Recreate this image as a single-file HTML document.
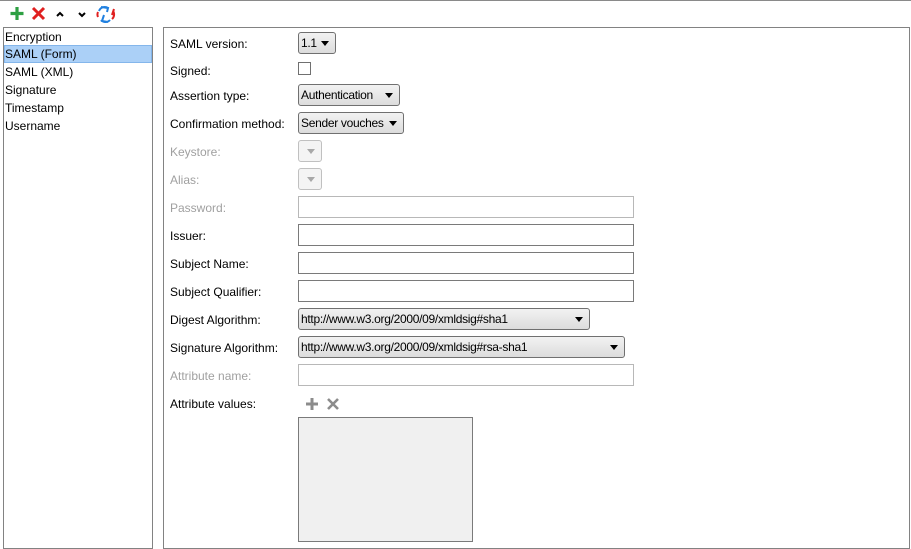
<!DOCTYPE html>
<html><head><style>
body{margin:0;width:911px;height:549px;background:#fff;position:relative;overflow:hidden;font-family:"Liberation Sans",sans-serif;font-size:12px;color:#000}
.a{position:absolute}
.lbl{position:absolute;left:170px;line-height:14px}
.dis{color:#a0a0a0}
.cb{position:absolute;left:298px;height:20px;border:1px solid #707070;border-radius:3px;background:linear-gradient(#f2f2f2,#dcdcdc);box-sizing:content-box;line-height:20px;padding-left:2px;letter-spacing:-0.3px;white-space:nowrap}
.cb:after{content:"";position:absolute;right:6px;top:8px;border-left:4px solid transparent;border-right:4px solid transparent;border-top:5px solid #000}
.cb.d{border-color:#c0c0c0;background:#f4f4f4}
.cb.d:after{border-top-color:#a8a8a8}
.tf{position:absolute;left:298px;width:334px;height:20px;border:1px solid #7a7a7a;background:#fff}
.tf.d{border-color:#b8b8b8}
.li{position:absolute;left:5px;line-height:14px}
</style></head><body>
<div class="a" style="left:0;top:0;width:911px;height:1px;background:#8a8a8a"></div>
<svg class="a" style="left:9px;top:5px" width="110" height="18">
<path d="M8 2v13M1.5 8.5h13" stroke="#2ea043" stroke-width="3.2"/>
<path d="M24 3l11 11M35 3L24 14" stroke="#e02020" stroke-width="3"/>
<path d="M48 11l3-3 3 3" stroke="#000" stroke-width="2" fill="none"/>
<path d="M70 8l3 3 3-3" stroke="#000" stroke-width="2" fill="none"/>
<path d="M90 6a6 6 0 0 1 9-3M92 2l7 1-1 4" stroke="#2080e0" stroke-width="2" fill="none"/>
<path d="M104 6a6 6 0 0 1-1 8M105 4l-2 6" stroke="#e02020" stroke-width="2" fill="none"/>
<path d="M101 15a6 6 0 0 1-9 0M95 10l-2 6 6 1" stroke="#2080e0" stroke-width="2" fill="none"/>
<path d="M89 12a6 6 0 0 1 0-5" stroke="#e02020" stroke-width="2" fill="none"/>
</svg>
<div class="a" style="left:3px;top:27px;width:148px;height:520px;border:1px solid #828282"></div>
<div class="a" style="left:4px;top:45px;width:146px;height:16px;background:#abd0f7;border:1px solid #84b6eb"></div>
<div class="li" style="top:30px">Encryption</div>
<div class="li" style="top:47px">SAML (Form)</div>
<div class="li" style="top:65px">SAML (XML)</div>
<div class="li" style="top:83px">Signature</div>
<div class="li" style="top:101px">Timestamp</div>
<div class="li" style="top:119px">Username</div>
<div class="a" style="left:163px;top:27px;width:745px;height:520px;border:1px solid #828282"></div>
<div class="lbl" style="top:37px">SAML version:</div>
<div class="lbl" style="top:64px">Signed:</div>
<div class="lbl" style="top:89px">Assertion type:</div>
<div class="lbl" style="top:117px">Confirmation method:</div>
<div class="lbl dis" style="top:145px">Keystore:</div>
<div class="lbl dis" style="top:173px">Alias:</div>
<div class="lbl dis" style="top:201px">Password:</div>
<div class="lbl" style="top:229px">Issuer:</div>
<div class="lbl" style="top:257px">Subject Name:</div>
<div class="lbl" style="top:285px">Subject Qualifier:</div>
<div class="lbl" style="top:313px">Digest Algorithm:</div>
<div class="lbl" style="top:341px">Signature Algorithm:</div>
<div class="lbl dis" style="top:369px">Attribute name:</div>
<div class="lbl" style="top:397px">Attribute values:</div>
<div class="cb" style="top:32px;width:34px">1.1</div>
<div class="a" style="left:298px;top:62px;width:11px;height:11px;border:1px solid #707070;background:#fff"></div>
<div class="cb" style="top:84px;width:98px">Authentication</div>
<div class="cb" style="top:112px;width:102px">Sender vouches</div>
<div class="cb d" style="top:140px;width:20px"></div>
<div class="cb d" style="top:168px;width:20px"></div>
<div class="tf d" style="top:196px"></div>
<div class="tf" style="top:224px"></div>
<div class="tf" style="top:252px"></div>
<div class="tf" style="top:280px"></div>
<div class="cb" style="top:308px;width:288px">http://www.w3.org/2000/09/xmldsig#sha1</div>
<div class="cb" style="top:336px;width:323px">http://www.w3.org/2000/09/xmldsig#rsa-sha1</div>
<div class="tf d" style="top:364px"></div>
<svg class="a" style="left:304px;top:396px" width="40" height="16">
<path d="M8 2v12M2 8h12" stroke="#8c8c8c" stroke-width="3"/>
<path d="M24 3l10 10M34 3L24 13" stroke="#8c8c8c" stroke-width="2.6"/>
</svg>
<div class="a" style="left:298px;top:417px;width:173px;height:123px;border:1px solid #7a7a7a;background:#f0f0f0"></div>
</body></html>
